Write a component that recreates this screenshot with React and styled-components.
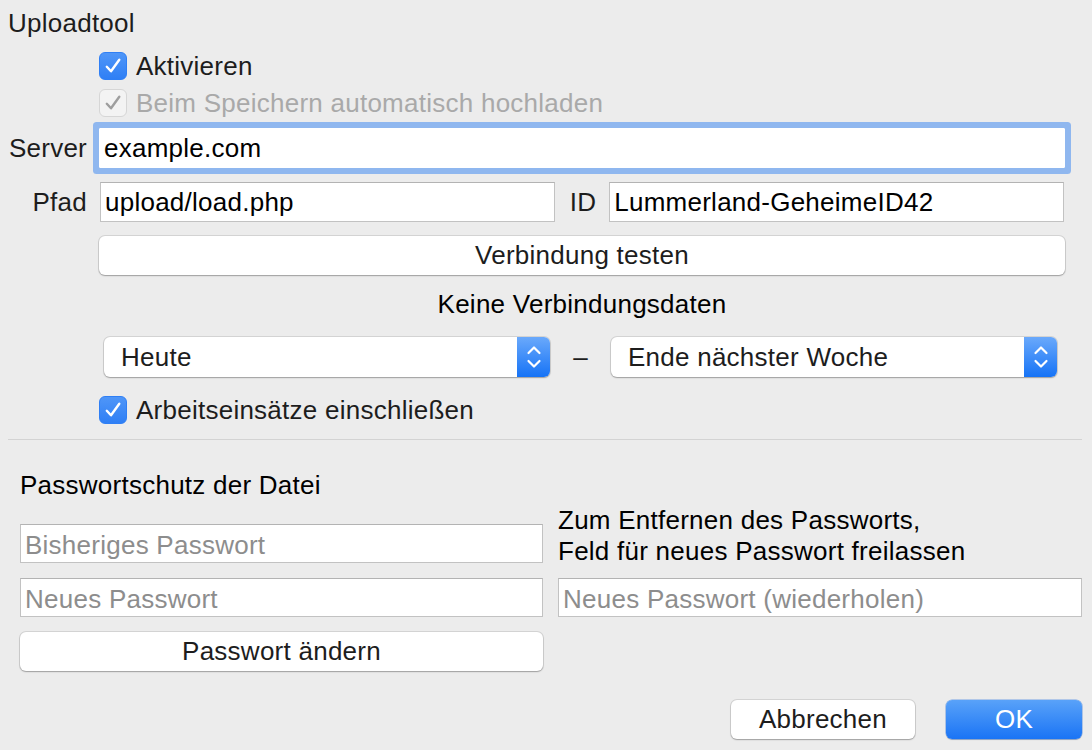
import React from 'react';
import styled, { createGlobalStyle } from 'styled-components';

const GlobalStyle = createGlobalStyle`
  html, body {
    margin: 0;
    padding: 0;
    background: #ececec;
  }
  body {
    font-family: 'Liberation Sans', Arial, sans-serif;
    font-size: 26px;
    letter-spacing: 0.25px;
    color: #1d1d1d;
  }
`;

export const Window = styled.div`
  width: 1092px;
  height: 750px;
  box-sizing: border-box;
  padding: 8px 10px 0 8px;
  display: flex;
  flex-direction: column;
  background: #ececec;
`;

export const Title = styled.div`
  line-height: 30px;
  height: 30px;
`;

export const Row = styled.div`
  display: flex;
  align-items: center;
  margin-top: ${({ top }) => top || 0}px;
`;

export const Label = styled.div`
  width: 79px;
  flex: 0 0 79px;
  margin-right: 12px;
  text-align: right;
  line-height: 30px;
`;

export const Content = styled.div`
  width: 966px;
  flex: 0 0 966px;
`;

export const CheckRow = styled.label`
  display: flex;
  align-items: center;
  gap: 9px;
  height: 28px;
  line-height: 28px;
  color: ${({ disabled }) => (disabled ? '#a9a9a9' : '#1d1d1d')};
`;

export const Box = styled.span`
  width: 28px;
  height: 28px;
  box-sizing: border-box;
  border-radius: 6px;
  display: flex;
  align-items: center;
  justify-content: center;
  background: ${({ disabled }) => (disabled ? '#f3f3f3' : 'linear-gradient(#4f96f8, #2f7ff5)')};
  border: 1px solid ${({ disabled }) => (disabled ? '#d6d6d6' : '#2f7ff5')};
`;

export const Field = styled.div`
  height: ${({ tall }) => (tall ? 40 : 39)}px;
  box-sizing: border-box;
  background: #fff;
  border: 1px solid #c2c2c2;
  border-top-color: #b3b3b3;
  padding: 0 4px;
  line-height: ${({ placeholder }) => (placeholder ? 41 : 38)}px;
  color: ${({ placeholder }) => (placeholder ? '#8d8d8d' : '#000')};
  white-space: nowrap;
  overflow: hidden;
`;

export const FocusField = styled(Field)`
  border-color: #fff;
  box-shadow: 0 0 0 6px #8fb7ef;
  border-radius: 1px;
  line-height: 38px;
`;

export const PathGrid = styled.div`
  display: grid;
  grid-template-columns: 1fr auto 1fr;
  align-items: center;
  column-gap: 13px;
  padding: 0 1px;
`;

export const Inline = styled.span`
  line-height: 30px;
  padding-left: 2px;
`;

export const Button = styled.div`
  height: 39px;
  box-sizing: border-box;
  background: ${({ primary }) => (primary ? 'linear-gradient(#59a2f9, #1a74f5)' : '#fff')};
  color: ${({ primary }) => (primary ? '#fff' : '#1d1d1d')};
  border-radius: 6px;
  box-shadow: ${({ primary }) =>
    primary
      ? '0 0 0 0.5px rgba(0,90,220,0.5), 0 1px 1px rgba(0,0,0,0.2)'
      : '0 0 0 1px rgba(0,0,0,0.1), 0 1px 1.5px rgba(0,0,0,0.25)'};
  display: flex;
  align-items: center;
  justify-content: center;
  width: ${({ w }) => (w ? `${w}px` : 'auto')};
`;

export const Status = styled.div`
  text-align: center;
  line-height: 30px;
  color: #000;
`;

export const PopupGrid = styled.div`
  display: grid;
  grid-template-columns: 1fr 61px 1fr;
  align-items: center;
  padding: 0 8px 0 5px;
`;

export const Dash = styled.div`
  text-align: center;
  line-height: 30px;
`;

export const Popup = styled.div`
  height: 40px;
  display: flex;
  background: #fff;
  border-radius: 6px;
  box-shadow: 0 0 0 1px rgba(0,0,0,0.1), 0 1px 1.5px rgba(0,0,0,0.25);
  overflow: hidden;
`;

export const PopupText = styled.div`
  flex: 1;
  padding-left: 17px;
  line-height: 40px;
  color: #1d1d1d;
`;

export const Stepper = styled.div`
  width: 33px;
  background: linear-gradient(#6aa9fb, #1673f6);
  display: flex;
  align-items: center;
  justify-content: center;
`;

export const Separator = styled.div`
  height: 1px;
  background: #d3d3d3;
  margin-top: 15px;
`;

export const Section = styled.div`
  padding-left: 12px;
  margin-top: 30px;
  line-height: 30px;
  color: #000;
`;

export const PassGrid = styled.div`
  display: grid;
  grid-template-columns: 523px 524px;
  grid-auto-rows: 39px;
  column-gap: 15px;
  row-gap: 15px;
  margin: 24px 0 0 12px;
`;

export const Hint = styled.div`
  line-height: 31px;
  align-self: start;
  margin-top: -19px;
  color: #000;
  white-space: nowrap;
`;

export const Footer = styled.div`
  display: flex;
  justify-content: flex-end;
  gap: 31px;
  margin-top: 29px;
`;

const Check = ({ color }) => (
  <svg width='20' height='20' viewBox='0 0 20 20'>
    <path d='M3.8 10.8 L8 15.3 L16.3 3.8' fill='none' stroke={color} strokeWidth='2.4' strokeLinecap='round' strokeLinejoin='round' />
  </svg>
);

const Checkbox = ({ disabled, children }) => (
  <CheckRow disabled={disabled}>
    <Box disabled={disabled}>
      <Check color={disabled ? '#9e9e9e' : '#fff'} />
    </Box>
    {children}
  </CheckRow>
);

const Select = ({ value }) => (
  <Popup>
    <PopupText>{value}</PopupText>
    <Stepper>
      <svg width='18' height='28' viewBox='0 0 18 28'>
        <path d='M3.5 10 L9 4.5 L14.5 10 M3.5 18 L9 23.5 L14.5 18' fill='none' stroke='#fff' strokeWidth='2.2' strokeLinecap='round' strokeLinejoin='round' />
      </svg>
    </Stepper>
  </Popup>
);

const App = () => {
  return (
    <>
      <GlobalStyle />
      <Window>
        <Title>Uploadtool</Title>
        <Row top={14}>
          <Label />
          <Content>
            <Checkbox>Aktivieren</Checkbox>
          </Content>
        </Row>
        <Row top={9}>
          <Label />
          <Content>
            <Checkbox disabled>Beim Speichern automatisch hochladen</Checkbox>
          </Content>
        </Row>
        <Row top={11}>
          <Label>Server</Label>
          <Content>
            <FocusField tall>example.com</FocusField>
          </Content>
        </Row>
        <Row top={14}>
          <Label>Pfad</Label>
          <Content>
            <PathGrid>
              <Field tall>upload/load.php</Field>
              <Inline>ID</Inline>
              <Field tall>Lummerland-GeheimeID42</Field>
            </PathGrid>
          </Content>
        </Row>
        <Row top={14}>
          <Label />
          <Content>
            <Button>Verbindung testen</Button>
          </Content>
        </Row>
        <Row top={14}>
          <Label />
          <Content>
            <Status>Keine Verbindungsdaten</Status>
          </Content>
        </Row>
        <Row top={18}>
          <Label />
          <Content>
            <PopupGrid>
              <Select value='Heute' />
              <Dash>–</Dash>
              <Select value='Ende nächster Woche' />
            </PopupGrid>
          </Content>
        </Row>
        <Row top={19}>
          <Label />
          <Content>
            <Checkbox>Arbeitseinsätze einschließen</Checkbox>
          </Content>
        </Row>
        <Separator />
        <Section>Passwortschutz der Datei</Section>
        <PassGrid>
          <Field placeholder>Bisheriges Passwort</Field>
          <Hint>
            Zum Entfernen des Passworts,
            <br />
            Feld für neues Passwort freilassen
          </Hint>
          <Field placeholder>Neues Passwort</Field>
          <Field placeholder>Neues Passwort (wiederholen)</Field>
          <Button>Passwort ändern</Button>
        </PassGrid>
        <Footer>
          <Button w={184}>Abbrechen</Button>
          <Button primary w={136}>OK</Button>
        </Footer>
      </Window>
    </>
  );
};

export default App;
